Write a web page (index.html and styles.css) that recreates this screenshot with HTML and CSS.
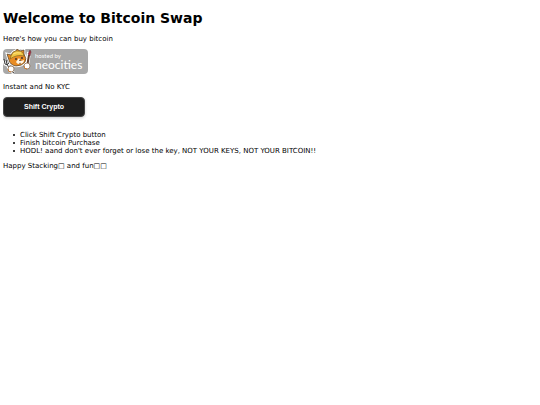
FILE: index.html
```html
<!DOCTYPE html>
<html lang="en">
<head>
<meta charset="utf-8">
<title>Bitcoin Swap</title>
<link rel="stylesheet" href="styles.css">
</head>
<body>
<h1>Welcome to Bitcoin Swap</h1>
<p>Here's how you can buy bitcoin</p>
<a class="badge" href="#" aria-label="hosted by neocities">
  <svg class="cat" viewBox="0 0 32 25" aria-hidden="true">
    <path d="M1 11l1 4 3 1 1-3M4 15l3 7 4 2" fill="none" stroke="#fff" stroke-width="3"/>
    <path d="M1 10l1 5q2 2 4-1l-1-3M3 11l1 4 3 6 4 3" fill="none" stroke="#383838" stroke-width="1"/>
    <path d="M26 3L24 17" stroke="#fff" stroke-width="4"/>
    <path d="M26 6l-2 12" stroke="#65412f" stroke-width="2"/>
    <path d="M25 5l2-4 1 2-1 4z" fill="#b5283c" stroke="#4b3030" stroke-width=".5"/>
    <path d="M5 8L4 5l4 1q2-4 5-4l1-2 3 2 4-1v4q3 5 1 8-3 4-9 4-6-1-7-6z" fill="#e88c24" stroke="#fff" stroke-width="2.500"/>
    <path d="M5 8L4 5l4 1q2-4 5-4l1-2 3 2 4-1v4q3 5 1 8-3 4-9 4-6-1-7-6z" fill="#e88c24" stroke="#4c3922" stroke-width=".7"/>
    <path d="M8 7q2-6 8-5 4 0 5 5-7-2-14 3z" fill="#f1c744" stroke="#76551e" stroke-width=".6"/>
    <path d="M10 5q4-2 8-1" fill="none" stroke="#ffe688" stroke-width=".8"/>
    <path d="M13 13l3-4 2 3 3-1q0 4-5 4-2 0-3-2z" fill="#fff6e5"/>
    <circle cx="13" cy="10" r=".9" fill="#332b27"/>
    <circle cx="19" cy="9" r=".9" fill="#332b27"/>
    <path d="M16 11h2l-1 1zM16 14q1 1 2 0" fill="#6b4432" stroke="#6b4432" stroke-width=".4"/>
    <circle cx="8" cy="20" r="3" fill="#fff" stroke="#8a6543" stroke-width=".7"/>
    <circle cx="24" cy="17" r="3" fill="#fff" stroke="#8a6543" stroke-width=".7"/>
    <path d="M5 20q0 3 3 3M21 17q0 3 3 3" fill="none" stroke="#c97b32" stroke-width="1"/>
  </svg>
  <span class="words"><span class="hosted">hosted by</span><span class="brand">neocities</span></span>
</a>
<p>Instant and No KYC</p>
<button class="shift" type="button">Shift Crypto</button>
<ul>
  <li>Click Shift Crypto button</li>
  <li>Finish bitcoin Purchase</li>
  <li>HODL! aand don't ever forget or lose the key, NOT YOUR KEYS, NOT YOUR BITCOIN!!</li>
</ul>
<p>Happy Stacking□ and fun□□</p>
</body>
</html>
```
FILE: styles.css
```css
body {
  margin: 10px 3px;
  background: #fff;
  color: #000;
  font: 7px/8px "DejaVu Sans", Verdana, sans-serif;
}
h1 {
  margin: 0 0 9px;
  font-size: 14px;
  line-height: 16px;
}
p {
  margin: 0 0 6px;
}
.badge {
  display: flex;
  width: 85px;
  height: 25px;
  margin-bottom: 9px;
  border-radius: 4px;
  background: #a8a8a8;
  color: #fff;
  font-family: Lato, sans-serif;
  text-decoration: none;
}
.cat {
  width: 32px;
  height: 25px;
}
.words {
  display: flex;
  flex-direction: column;
  padding-top: 3px;
}
.hosted {
  font-size: 6px;
  line-height: 8px;
}
.brand {
  font-size: 12px;
  line-height: 10px;
}
.shift {
  display: block;
  width: 82px;
  height: 20px;
  margin: 0 0 14px;
  padding: 0;
  border: 1px solid #444;
  border-radius: 4px;
  background: #1e1e1e;
  box-shadow: 0 1px 3px #0003;
  color: #fff;
  font: bold 7px/8px "Liberation Sans", Arial, sans-serif;
}
ul {
  margin: 0 0 7px;
  padding-left: 10px;
  list-style: none;
}
li {
  display: flex;
  align-items: center;
  gap: 5px;
}
li::before {
  content: "";
  width: 2px;
  height: 2px;
  border-radius: 1px;
  background: #000;
}
```
